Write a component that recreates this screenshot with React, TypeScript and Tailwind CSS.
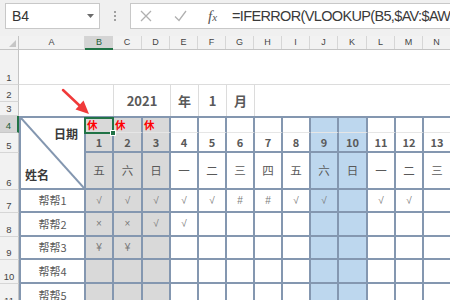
import React from "react";

const W = [
  "w-[28px]", "w-[29px]", "w-[28px]", "w-[28px]", "w-[28px]", "w-[28px]", "w-[28px]",
  "w-[28px]", "w-[28px]", "w-[29px]", "w-[28px]", "w-[28px]", "w-[28px]",
];
const LETTERS = ["B", "C", "D", "E", "F", "G", "H", "I", "J", "K", "L", "M", "N"];
const GRAY = "bg-[#d9d9d9]";
const BLUE = "bg-[#bdd7ee]";
const WHITE = "bg-white";
const BG = [GRAY, GRAY, GRAY, WHITE, WHITE, WHITE, WHITE, WHITE, BLUE, BLUE, WHITE, WHITE, WHITE];
const DAYS = ["五", "六", "日", "一", "二", "三", "四", "五", "六", "日", "一", "二", "三"];
const E13 = ["", "", "", "", "", "", "", "", "", "", "", "", ""];
const DATA = [
  { name: "帮帮1", h: "h-[23px]", v: ["√", "√", "√", "√", "√", "#", "#", "√", "√", "", "√", "√", ""] },
  { name: "帮帮2", h: "h-[24px]", v: ["×", "×", "√", "√", "", "", "", "", "", "", "", "", ""] },
  { name: "帮帮3", h: "h-[23px]", v: ["¥", "¥", "", "", "", "", "", "", "", "", "", "", ""] },
  { name: "帮帮4", h: "h-[24px]", v: E13 },
  { name: "帮帮5", h: "h-[24px]", v: E13 },
];
const ROWH = [
  { n: "1", h: "h-[35px]" },
  { n: "2", h: "h-[17px]" },
  { n: "3", h: "h-[14px]" },
  { n: "4", h: "h-[17px]", sel: true },
  { n: "5", h: "h-[20px]" },
  { n: "6", h: "h-[37px]" },
  { n: "7", h: "h-[23px]" },
  { n: "8", h: "h-[24px]" },
  { n: "9", h: "h-[23px]" },
  { n: "10", h: "h-[24px]" },
  { n: "11", h: "h-[24px]" },
];

export default function App() {
  return (
    <div className="relative w-[450px] h-[300px] overflow-hidden bg-white font-['Noto_Sans_CJK_SC',sans-serif]">
      {/* Formula bar */}
      <div className="flex h-[36px] bg-[#f0f0f0] pt-[3px] pl-[5px]">
        <div className="shrink-0 w-[95px] h-[26px] bg-white border border-[#c8c8c8] flex items-center justify-between pl-[6px] pr-[5px]">
          <span className="font-['Liberation_Sans',sans-serif] text-[14px] leading-none text-[#333]">B4</span>
          <svg width="7" height="4" viewBox="0 0 7 4">
            <polygon points="0,0 7,0 3.5,4" fill="#6b6b6b" />
          </svg>
        </div>
        <div className="shrink-0 w-[30px] h-[26px] flex flex-col items-center justify-center gap-[2px]">
          <div className="w-[2px] h-[2px] bg-[#a0a0a0]" />
          <div className="w-[2px] h-[2px] bg-[#a0a0a0]" />
          <div className="w-[2px] h-[2px] bg-[#a0a0a0]" />
        </div>
        <div className="shrink-0 w-[330px] h-[26px] bg-white border border-[#c8c8c8] border-r-0 flex items-center">
          <svg className="ml-[9px] shrink-0" width="12" height="12" viewBox="0 0 12 12">
            <path d="M1 1 L11 11 M11 1 L1 11" stroke="#b0b0b0" strokeWidth="1.3" fill="none" />
          </svg>
          <svg className="ml-[22px] shrink-0" width="13" height="12" viewBox="0 0 13 12">
            <path d="M1 6.5 L5 10.5 L12 1" stroke="#b0b0b0" strokeWidth="1.3" fill="none" />
          </svg>
          <div className="ml-[21px] w-[16px] shrink-0 font-['Liberation_Serif',serif] italic text-[15px] leading-none text-[#555]">
            f<span className="text-[11px]">x</span>
          </div>
          <div className="ml-[8px] whitespace-nowrap font-['Liberation_Sans',sans-serif] text-[14.5px] tracking-[-0.65px] leading-none text-[#3a3a3a]">
            =IFERROR(VLOOKUP(B5,$AV:$AW
          </div>
        </div>
      </div>

      {/* Column headers */}
      <div className="flex h-[14px] bg-[#f2f2f2] border-b border-[#c4c4c4] font-['Liberation_Sans',sans-serif] text-[9px] text-[#444] leading-none">
        <div className="relative shrink-0 w-[19px] h-full border-r border-[#c4c4c4]">
          <svg className="absolute right-[2px] bottom-[2px]" width="7" height="7" viewBox="0 0 7 7">
            <polygon points="7,0 7,7 0,7" fill="#c6c6c6" />
          </svg>
        </div>
        <div className="shrink-0 w-[66px] h-full border-r border-[#d6d6d6] flex items-center justify-center">A</div>
        {LETTERS.map((l, i) =>
          i === 0 ? (
            <div key={l} className={`${W[i]} shrink-0 h-[14px] bg-[#d4d4d4] border-b-2 border-[#217346] text-[#1e5c38] flex items-center justify-center`}>
              {l}
            </div>
          ) : (
            <div key={l} className={`${W[i]} shrink-0 h-full border-r border-[#d6d6d6] flex items-center justify-center`}>
              {l}
            </div>
          )
        )}
      </div>

      {/* Body */}
      <div className="flex">
        {/* Row headers */}
        <div className="shrink-0 w-[19px] flex flex-col bg-[#f2f2f2] font-['Liberation_Sans',sans-serif] text-[9.5px] leading-none text-[#444]">
          {ROWH.map((r) =>
            r.sel ? (
              <div key={r.n} className={`${r.h} bg-[#d4d4d4] border-b border-[#c8c8c8] border-r-2 border-r-[#217346] text-[#1e5c38] flex items-end justify-center pb-[2px]`}>
                {r.n}
              </div>
            ) : (
              <div key={r.n} className={`${r.h} border-b border-[#d6d6d6] border-r border-r-[#c4c4c4] flex items-end justify-center pb-[2px]`}>
                {r.n}
              </div>
            )
          )}
        </div>

        {/* Sheet */}
        <div className="shrink-0 flex flex-col">
          {/* Row 1 */}
          <div className="h-[35px] border-b border-[#dcdcdc]" />
          {/* Rows 2-3 */}
          <div className="flex h-[31px] text-[13px] font-bold text-[#595959] leading-none">
            <div className="shrink-0 w-[67px]" />
            <div className="shrink-0 w-[28px] border-r border-[#dcdcdc]" />
            <div className="shrink-0 w-[57px] border-r border-[#dcdcdc] flex items-center justify-center">2021</div>
            <div className="shrink-0 w-[28px] border-r border-[#dcdcdc] flex items-center justify-center">年</div>
            <div className="shrink-0 w-[28px] border-r border-[#dcdcdc] flex items-center justify-center">1</div>
            <div className="shrink-0 w-[28px] border-r border-[#dcdcdc] flex items-center justify-center">月</div>
            <div className="shrink-0 w-[197px]" />
          </div>
          {/* Rows 4-6 */}
          <div className="flex border-t-2 border-[#8497b0]">
            <div className="relative shrink-0 w-[67px] h-[72px] bg-white border-l-2 border-r-2 border-b-2 border-[#8497b0] flex flex-col">
              <svg className="absolute inset-0 w-full h-full" viewBox="0 0 100 100" preserveAspectRatio="none">
                <line x1="0" y1="0" x2="100" y2="100" stroke="#8497b0" strokeWidth="2" vectorEffect="non-scaling-stroke" />
              </svg>
              <span className="relative self-end mr-[6px] mt-[10px] text-[12px] font-bold leading-none text-[#3a3a3a]">日期</span>
              <span className="relative self-start ml-[4px] mt-auto mb-[7px] text-[12px] font-bold leading-none text-[#3a3a3a]">姓名</span>
            </div>
            {LETTERS.map((l, i) => (
              <div key={l} className={`${W[i]} shrink-0 flex flex-col`}>
                <div className={`${BG[i]} relative h-[15px] border-r-2 border-b border-r-[#8497b0] border-b-[#e6e6e6] flex items-center pl-[1px]`}>
                  {i < 3 && <span className="text-[10.5px] font-bold leading-none text-[#ff0000]">休</span>}
                  {i === 0 && (
                    <div className="absolute -left-[2px] -top-[1px] -right-[2px] -bottom-[2px] border-2 border-[#217346] z-10">
                      <div className="absolute -right-[4px] -bottom-[4px] w-[6px] h-[6px] bg-[#217346] border border-white" />
                    </div>
                  )}
                </div>
                <div className={`${BG[i]} h-[20px] border-r-2 border-b-2 border-[#8497b0] flex items-center justify-center text-[11px] font-bold leading-none text-[#595959]`}>
                  {i + 1}
                </div>
                <div className={`${BG[i]} h-[37px] border-r-2 border-b-2 border-[#8497b0] flex items-center justify-center text-[11.5px] leading-none text-[#595959]`}>
                  {DAYS[i]}
                </div>
              </div>
            ))}
          </div>
          {/* Data rows */}
          {DATA.map((row) => (
            <div key={row.name} className={`flex ${row.h}`}>
              <div className="shrink-0 w-[67px] bg-white border-l-2 border-r-2 border-b-2 border-[#8497b0] flex items-center justify-center text-[11px] leading-none text-[#595959]">
                {row.name}
              </div>
              {row.v.map((v, i) => (
                <div
                  key={i}
                  className={`${W[i]} ${BG[i]} shrink-0 border-r-2 border-b-2 border-[#8497b0] flex items-center justify-center font-['Liberation_Sans','DejaVu_Sans',sans-serif] text-[10px] leading-none text-[#7a7a7a]`}
                >
                  {v}
                </div>
              ))}
            </div>
          ))}
        </div>
      </div>

      {/* Red arrow overlay */}
      <svg className="absolute left-0 top-0 pointer-events-none z-20" width="450" height="300" viewBox="0 0 450 300">
        <line x1="63" y1="90" x2="80" y2="106" stroke="#f03a3a" strokeWidth="2.5" strokeLinecap="round" />
        <polygon points="89,114 75.5,109.5 83.5,100.5" fill="#f03a3a" />
      </svg>
    </div>
  );
}
